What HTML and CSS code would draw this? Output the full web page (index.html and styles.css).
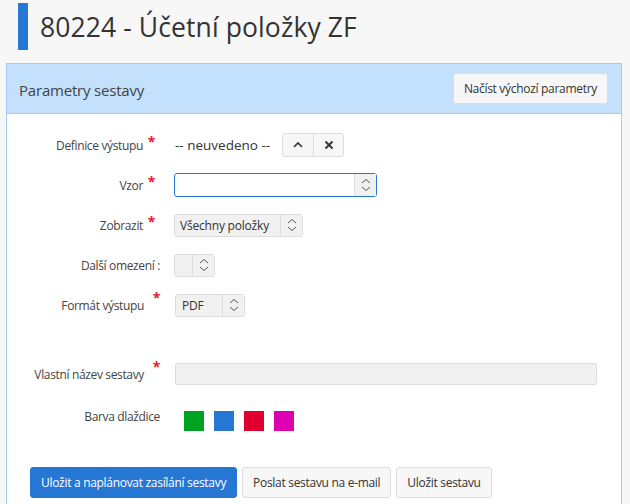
FILE: index.html
```html
<!DOCTYPE html>
<html lang="cs">
<head>
<meta charset="utf-8">
<link rel="stylesheet" href="styles.css">
</head>
<body>
<header class="page-title">
  <span class="title-bar"></span>
  <h1>80224 - Účetní položky ZF</h1>
</header>
<section class="panel">
  <div class="panel-head">
    <h2>Parametry sestavy</h2>
    <button class="btn btn-light">Načíst výchozí parametry</button>
  </div>
  <div class="panel-body">
    <div class="form">
      <div class="row r1">
        <label class="lbl">Definice výstupu<span class="req">*</span></label>
        <div class="ctrl">
          <span class="plain">-- neuvedeno --</span>
          <div class="btn-group">
            <button class="ibtn"><svg width="12" height="12" viewBox="0 0 12 12"><path d="M2 8 L6 4 L10 8" fill="none" stroke="#333" stroke-width="1.6"/></svg></button>
            <button class="ibtn"><svg width="12" height="12" viewBox="0 0 12 12"><path d="M2.5 2.5 L9.5 9.5 M9.5 2.5 L2.5 9.5" fill="none" stroke="#333" stroke-width="1.9"/></svg></button>
          </div>
        </div>
      </div>
      <div class="row r2">
        <label class="lbl">Vzor<span class="req">*</span></label>
        <div class="ctrl">
          <div class="select focus w-vzor"><span class="val"></span><span class="spin"><svg width="12" height="16" viewBox="0 0 12 16"><path d="M2 6 L6 2.5 L10 6 M2 10 L6 13.5 L10 10" fill="none" stroke="#555" stroke-width="1"/></svg></span></div>
        </div>
      </div>
      <div class="row r3">
        <label class="lbl">Zobrazit<span class="req">*</span></label>
        <div class="ctrl">
          <div class="select w-zob"><span class="val">Všechny položky</span><span class="spin"><svg width="12" height="16" viewBox="0 0 12 16"><path d="M2 6 L6 2.5 L10 6 M2 10 L6 13.5 L10 10" fill="none" stroke="#555" stroke-width="1"/></svg></span></div>
        </div>
      </div>
      <div class="row r4">
        <label class="lbl">Další omezení :</label>
        <div class="ctrl">
          <div class="select w-dal"><span class="val"></span><span class="spin"><svg width="12" height="16" viewBox="0 0 12 16"><path d="M2 6 L6 2.5 L10 6 M2 10 L6 13.5 L10 10" fill="none" stroke="#555" stroke-width="1"/></svg></span></div>
        </div>
      </div>
      <div class="row r5">
        <label class="lbl">Formát výstupu<span class="req up">*</span></label>
        <div class="ctrl">
          <div class="select w-pdf"><span class="val">PDF</span><span class="spin"><svg width="12" height="16" viewBox="0 0 12 16"><path d="M2 6 L6 2.5 L10 6 M2 10 L6 13.5 L10 10" fill="none" stroke="#555" stroke-width="1"/></svg></span></div>
        </div>
      </div>
      <div class="row r6">
        <label class="lbl">Vlastní název sestavy<span class="req up">*</span></label>
        <div class="ctrl">
          <div class="text-input disabled"></div>
        </div>
      </div>
      <div class="row r7">
        <label class="lbl">Barva dlaždice</label>
        <div class="ctrl swatches">
          <span class="sw green"></span>
          <span class="sw blue"></span>
          <span class="sw red"></span>
          <span class="sw magenta"></span>
        </div>
      </div>
    </div>
    <div class="actions">
      <button class="btn btn-primary">Uložit a naplánovat zasílání sestavy</button>
      <button class="btn btn-light">Poslat sestavu na e-mail</button>
      <button class="btn btn-light">Uložit sestavu</button>
    </div>
  </div>
</section>
</body>
</html>
```

FILE: styles.css
```css
* { box-sizing: border-box; }
html, body { margin: 0; padding: 0; }
body {
  background: #f7f7f7;
  font-family: "Open Sans", "Noto Sans", sans-serif;
  color: #333;
  width: 630px;
  height: 504px;
  overflow: hidden;
}
.page-title {
  display: flex;
  align-items: center;
  height: 53px;
  padding: 3px 0 3px 18px;
}
.title-bar {
  width: 10px;
  height: 47px;
  background: #2677d4;
}
.page-title h1 {
  margin: 0 0 0 12px;
  font-weight: 400;
  font-size: 26.5px;
  color: #333;
  letter-spacing: 0.1px;
}
.panel {
  margin: 10px 8px 0 6px;
  border: 1px solid #9fcdf4;
  border-bottom: none;
  background: #fff;
  height: 460px;
}
.panel-head {
  height: 50px;
  background: #c3e1fc;
  border-bottom: 1px solid #9fcdf4;
  display: flex;
  align-items: center;
  justify-content: space-between;
  padding: 0 13px 0 12px;
}
.panel-head h2 {
  margin: 2px 0 0 0;
  font-weight: 400;
  font-size: 15px;
  letter-spacing: -0.2px;
  color: #444;
}
.btn {
  font-family: inherit;
  font-size: 12px;
  letter-spacing: -0.3px;
  height: 31px;
  border-radius: 3px;
  padding: 0 10px;
  cursor: pointer;
}
.btn-light {
  background: #f7f7f7;
  border: 1px solid #ddd;
  color: #333;
}
.btn-primary {
  background: #2677d4;
  border: 1px solid #2677d4;
  color: #fff;
}
.panel-body {
  padding: 19px 24px 0 0;
}
.form {
  display: flex;
  flex-direction: column;
}
.row {
  display: grid;
  grid-template-columns: 153px 1fr;
  column-gap: 14px;
  align-items: center;
  height: 24px;
  margin-bottom: 16px;
}
.row.r5 { margin-bottom: 46px; }
.row.r6 { height: 22px; margin-bottom: 26px; }
.row.r7 { height: 20px; margin-bottom: 36px; }
.lbl {
  text-align: right;
  font-size: 12px;
  letter-spacing: -0.35px;
  color: #444;
  white-space: nowrap;
}
.req {
  display: inline-block;
  width: 17px;
  text-align: center;
  color: #e8192c;
  font-weight: 700;
  font-size: 14px;
  line-height: 10px;
  vertical-align: 3px;
}
.req.up {
  position: relative;
  top: -7px;
  vertical-align: baseline;
  width: 16px;
  text-align: right;
}
.r7 .lbl { margin-top: -10px; }
.ctrl {
  display: flex;
  align-items: center;
}
.plain {
  font-size: 13.5px;
  color: #333;
  margin-left: 1px;
  margin-right: 12px;
}
.btn-group {
  display: flex;
  border: 1px solid #ddd;
  border-radius: 3px;
  background: #f7f7f7;
  height: 24px;
}
.ibtn {
  width: 30px;
  height: 22px;
  border: none;
  background: transparent;
  display: flex;
  align-items: center;
  justify-content: center;
  padding: 0;
}
.ibtn + .ibtn { border-left: 1px solid #ddd; }
.select {
  display: flex;
  align-items: stretch;
  border: 1px solid #ddd;
  border-radius: 3px;
  background: #f1f1f1;
  height: 24px;
}
.select.focus {
  border-color: #2677d4;
  background: #fff;
}
.select .val {
  flex: 1;
  font-size: 12px;
  letter-spacing: -0.2px;
  padding: 0 0 0 5px;
  display: flex;
  align-items: center;
  color: #333;
}
.select .spin {
  width: 22px;
  border-left: 1px solid #ddd;
  display: flex;
  align-items: center;
  justify-content: center;
  background: #f1f1f1;
}
.w-vzor { width: 203px; height: 24px; }
.w-zob { width: 129px; height: 23px; }
.w-dal { width: 41px; height: 23px; }
.w-pdf { width: 70px; height: 23px; margin-left: 1px; }
.w-pdf .val { padding-left: 6px; }
.text-input {
  width: 422px;
  height: 22px;
  margin-left: 1px;
  border: 1px solid #ddd;
  border-radius: 2px;
  background: #f1f1f1;
}
.swatches {
  gap: 10px;
  padding-left: 10px;
}
.sw {
  width: 20px;
  height: 20px;
  display: block;
}
.sw.green { background: #00a321; }
.sw.blue { background: #2677d4; }
.sw.red { background: #e00030; }
.sw.magenta { background: #dd00b2; }
.actions {
  display: flex;
  gap: 5px;
  padding-left: 23px;
}
```
